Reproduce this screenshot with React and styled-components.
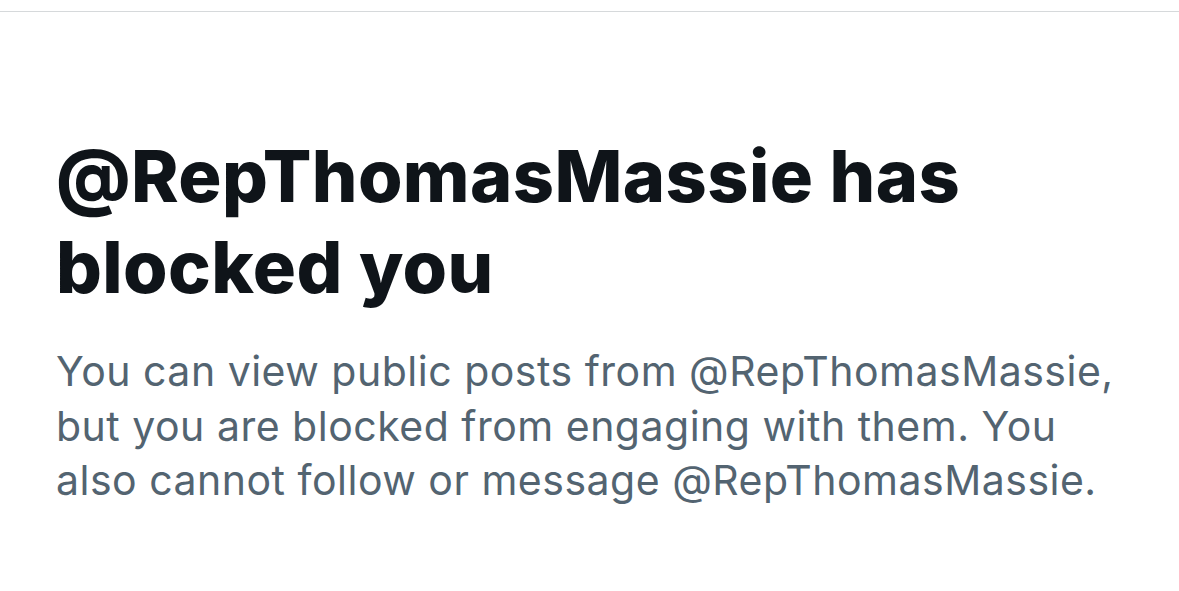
import React from "react";
import styled, { createGlobalStyle } from "styled-components";

const Global = createGlobalStyle`
  html, body { margin: 0; padding: 0; background: #ffffff; }
  body { font-family: Inter, "Noto Sans", sans-serif; -webkit-font-smoothing: antialiased; }
`;

const Page = styled.div`
  width: 1179px;
  height: 591px;
  background: #ffffff;
  overflow: hidden;
`;

const TopRule = styled.div`
  margin-top: 11px;
  height: 1px;
  background: #d6d9db;
`;

const Content = styled.section`
  padding: 118px 20px 0 56px;
  display: flex;
  flex-direction: column;
  gap: 32px;
`;

const Title = styled.h1`
  margin: 0;
  font-family: Inter, "Noto Sans", sans-serif;
  font-weight: 800;
  font-size: 72px;
  line-height: 91px;
  letter-spacing: 0.4px;
  color: #0f1419;
  white-space: nowrap;
`;

const Body = styled.p`
  margin: 0;
  font-family: Inter, "Noto Sans", sans-serif;
  font-weight: 400;
  font-size: 41px;
  line-height: 54.5px;
  letter-spacing: 0.5px;
  color: #536471;
  white-space: nowrap;
`;

export default function App() {
  return (
    <Page>
      <Global />
      <TopRule />
      <Content>
        <Title>
          @RepThomasMassie has
          <br />
          blocked you
        </Title>
        <Body>
          You can view public posts from @RepThomasMassie,
          <br />
          but you are blocked from engaging with them. You
          <br />
          also cannot follow or message @RepThomasMassie.
        </Body>
      </Content>
    </Page>
  );
}
